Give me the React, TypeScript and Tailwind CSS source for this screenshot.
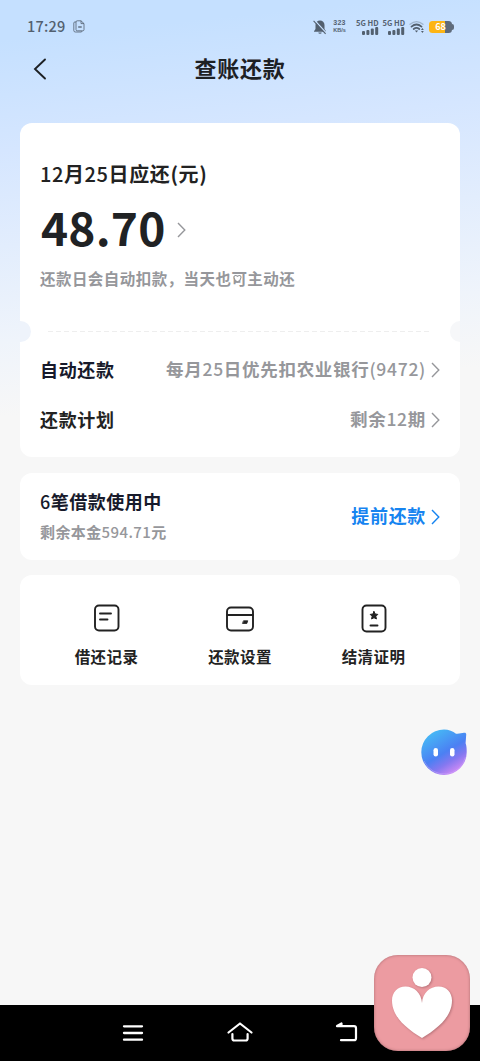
import type { ReactNode } from "react";

function Chevron({ className }: { className: string }) {
  return (
    <svg viewBox="0 0 9 16" className={`shrink-0 ${className}`} fill="none" stroke="currentColor" strokeWidth="1.4">
      <path d="M1 1l6.8 7L1 15" />
    </svg>
  );
}

function Signal() {
  return (
    <div className="flex w-[26.5px] flex-col items-center">
      <span className="whitespace-nowrap text-[7.5px] font-bold leading-[8px]">5G HD</span>
      <svg viewBox="0 0 17 8" className="ml-1.5 h-2 w-[17px]" fill="currentColor">
        <rect x="0" y="4" width="3" height="4" rx="1" />
        <rect x="4.4" y="3" width="3" height="5" rx="1" />
        <rect x="8.8" y="1.5" width="3" height="6.5" rx="1" />
        <rect x="13.2" y="0" width="3" height="8" rx="1" />
      </svg>
    </div>
  );
}

function StatusBar() {
  return (
    <div className="flex h-[44px] items-center justify-between pl-[27px] pr-[26px] pt-[9px] text-[#53606f]">
      <div className="flex items-center gap-[8px]">
        <span className="text-[14.5px] font-medium leading-none tracking-[0.2px]">17:29</span>
        <svg viewBox="0 0 12 13" className="h-[13px] w-3" fill="none" stroke="currentColor" strokeWidth="0.8">
          <path d="M3 2H1.8Q.8 2 .8 3v7.5q0 1.5 1.5 1.5H8q1 0 1-1" />
          <path d="M4.2.8H8L11 3.6v6q0 1.2-1.2 1.2H4.2Q3 10.8 3 9.6V2Q3 .8 4.2 .8ZM8 .8v2.8h3" />
          <path d="M5.2 7h3.5" strokeWidth="1.3" />
        </svg>
      </div>
      <div className="flex items-center">
        <svg viewBox="0 0 14 16" className="mr-[5px] h-4 w-[14px]">
          <path d="M7 1.5a4.5 4.5 0 0 1 4.5 4.5v4l1.5 2.2v.6H1v-.6L2.5 10V6A4.5 4.5 0 0 1 7 1.5ZM5.3 13.5h3.4a1.7 1.3 0 0 1-3.4 0Z" fill="currentColor" />
          <path d="M1.5 1.2l12 13" stroke="#cae2ff" strokeWidth="1.3" />
          <path d="M.6 1.8l12 13" stroke="currentColor" strokeWidth="1.1" />
        </svg>
        <div className="mr-[7px] flex w-[15px] flex-col items-center font-['Liberation_Sans',sans-serif] font-bold">
          <span className="h-[8px] text-[7px] leading-[8px] tracking-[0.3px]">323</span>
          <span className="h-[7px] text-[5.5px] leading-[7px]">KB/s</span>
        </div>
        <Signal />
        <Signal />
        <svg viewBox="0 0 16 14" className="ml-[2px] h-[14px] w-4" fill="none" stroke="currentColor" strokeLinecap="round">
          <path d="M1 4.3Q7.5-1.2 14 4.3" strokeWidth="1.2" opacity=".35" />
          <path d="M2.5 6.6Q7.5 2.5 12.5 6.6M4.7 9Q7.5 6.8 10.3 9" strokeWidth="1.8" />
          <path d="M5.8 10.4h3.4L7.5 12.5Z" fill="currentColor" stroke="none" />
          <path d="M12 10l1.4-1.9L14.8 10ZM12 11l1.4 1.9L14.8 11Z" fill="currentColor" stroke="none" />
        </svg>
        <div className="ml-1 flex items-center">
          <div className="flex h-3 w-[23px] items-center justify-center rounded-[3.5px] bg-[linear-gradient(90deg,#fdb515_70%,#5f6b7b_70%)] text-[9px] font-bold leading-none text-white">
            68
          </div>
          <div className="h-1.5 w-[2px] rounded-r-full bg-[#5f6b7b]" />
        </div>
      </div>
    </div>
  );
}

function InfoRow({ label, labelClass, children }: { label: string; labelClass: string; children: ReactNode }) {
  return (
    <div className="flex h-[50px] items-center justify-between">
      <span className={`-mt-[1.5px] text-[18px] font-bold tracking-[0.67px] ${labelClass}`}>{label}</span>
      <div className="-mt-px flex items-center gap-[5px] text-[#96979b]">
        <span className="-mt-px text-[17.5px] font-bold tracking-[0.7px]">{children}</span>
        <Chevron className="h-4 w-[9px]" />
      </div>
    </div>
  );
}

function Action({ label, children }: { label: string; children: ReactNode }) {
  return (
    <div className="flex w-[133.5px] flex-col items-center">
      <svg viewBox="0 0 30 30" className="h-[30px] w-[30px]" fill="none" stroke="#222" strokeWidth="1.9" strokeLinecap="round" strokeLinejoin="round">
        {children}
      </svg>
      <span className="mt-[11px] text-[15.5px] font-bold leading-[24px] tracking-[0.4px] text-[#222]">{label}</span>
    </div>
  );
}

function Assistant() {
  return (
    <svg viewBox="0 0 48 48" className="absolute left-[420px] top-[728px] h-12 w-12">
      <defs>
        <linearGradient id="bubble" x1=".25" y1=".05" x2=".8" y2=".95">
          <stop offset="0" stopColor="#46b8f5" />
          <stop offset=".5" stopColor="#4b80f3" />
          <stop offset=".72" stopColor="#8478f0" />
          <stop offset="1" stopColor="#d98cf5" />
        </linearGradient>
      </defs>
      <path
        d="M24 1.5c4.8 0 9 1.8 12 4.2 3 .3 5.5-.5 8-.9 1.7-.2 2.4.6 2.2 2l-.6 8.5c1 2.600 1.100 5.600 1.100 8.900A22.700 22.700 0 1 1 24 1.500Z"
        fill="url(#bubble)"
      />
      <path d="M4 33A22 22 0 0 0 45.500 29" fill="none" stroke="#c8a8ff" strokeWidth=".8" opacity=".6" />
      <rect x="13.500" y="20" width="4.500" height="8.500" rx="2.250" fill="#fff" />
      <rect x="30" y="20" width="4.500" height="8.500" rx="2.250" fill="#fff" />
    </svg>
  );
}

function HeartBadge() {
  return (
    <div className="absolute left-[374px] top-[955px] h-24 w-24 rounded-[24px] bg-[#ec9ba1] shadow-[inset_0_0_3px_#a86b70]">
      <svg viewBox="0 0 96 96" className="h-24 w-24 drop-shadow-[1px_1px_1px_#b8747a]" fill="#fff">
        <circle cx="48" cy="22.5" r="9.5" />
        <path d="M48 48C47.5 38 40 31.500 31.500 31.500 23.500 31.500 18 37.500 18 45.500 18 62 33 74 48 83 63 74 78 62 78 45.500 78 37.500 72.500 31.500 64.500 31.500 56 31.500 48.500 38 48 48Z" />
      </svg>
    </div>
  );
}

function NavBar() {
  return (
    <div className="flex h-14 items-center bg-black pl-[122px] text-white">
      <svg viewBox="0 0 22 18" className="h-[18px] w-[22px]" stroke="currentColor" strokeWidth="2.3" strokeLinecap="round">
        <path d="M2 2.3h18M2 9h18M2 15.7h18" />
      </svg>
      <svg viewBox="0 0 28 22" className="-mt-[5px] ml-[82px] h-[22px] w-7" fill="none" stroke="currentColor" strokeWidth="2.2" strokeLinecap="round" strokeLinejoin="round">
        <path d="M2.5 12.5L14 3.5l11.500 9M6.400 14v4.500q0 2 2 2h11.200q2 0 2-2V14" />
      </svg>
      <svg viewBox="0 0 24 22" className="-mt-[5px] ml-[80px] h-[22px] w-6" fill="none" stroke="currentColor" strokeWidth="2.2" strokeLinecap="round" strokeLinejoin="round">
        <path d="M3 6.200h17q2 0 2 2v10q0 2-2 2H7M3 6l4.500-2.500v2.500" />
      </svg>
    </div>
  );
}

export default function App() {
  return (
    <div className="relative flex h-[1061px] w-[480px] flex-col overflow-hidden bg-[#f7f7f7] font-['Noto_Sans_CJK_SC',sans-serif]">
      <div className="flex flex-1 flex-col bg-[linear-gradient(174deg,#c5e0ff_40px,#d5e6ff_150px,#eff4fb_340px,#f7f7f7_415px)]">
        <StatusBar />
        <header className="grid h-[50px] grid-cols-[70px_1fr_70px] items-center text-[#1d2024]">
          <svg viewBox="0 0 14 22" className="ml-[33px] h-[22px] w-[14px]" fill="none" stroke="currentColor" strokeWidth="1.9" strokeLinecap="round">
            <path d="M12 1.5L2 11l10 9.5" />
          </svg>
          <h1 className="-mt-1 text-center text-[22px] font-bold leading-none tracking-[0.8px]">查账还款</h1>
        </header>

        <main className="mx-5 mt-[29px] flex flex-col">
          <section className="relative h-[334px] rounded-[12px] bg-white px-5 pt-[36px]">
            <h2 className="text-[20px] font-bold leading-[30px] tracking-[0.6px] text-[#222]">
              <span className="font-medium">12</span>月<span className="font-medium">25</span>日应还(元)
            </h2>
            <div className="flex h-[82px] items-center">
              <span className="-mt-[8px] w-[137px] pl-px text-[46px] font-bold leading-none tracking-[0.2px] text-[#202224]">48.70</span>
              <Chevron className="h-4 w-[9px] text-[#96979b]" />
            </div>
            <p className="relative -top-px w-max text-[15.5px] font-bold leading-[16px] tracking-[0.45px] text-[#96979b]">
              还款日会自动扣款，当天也可主动还
              <svg viewBox="0 0 9 9" className="absolute left-[193px] top-[4px] h-[9px] w-[9px]" fill="#fff" stroke="#96979b" strokeWidth="1.1">
                <path d="M4.500 8C-1.500 4 1.500-.5 4.500 2.300 7.500-.5 10.500 4 4.500 8Z" />
              </svg>
            </p>
            <div className="mx-2 mt-[44px] h-px bg-[repeating-linear-gradient(90deg,#eee_0_5px,transparent_5px_8px)]" />
            <div className="mt-[13px]">
              <InfoRow label="自动还款" labelClass="text-[#171a2b]">
                每月<span className="font-medium">25</span>日优先扣农业银行<span className="font-medium">(9472)</span>
              </InfoRow>
              <InfoRow label="还款计划" labelClass="text-[#222]">
                剩余<span className="font-medium">12</span>期
              </InfoRow>
            </div>
            {/* ticket notches */}
            <div className="absolute left-0 top-[198px] h-[21px] w-[10.5px] rounded-r-full bg-[#eef3fb]" />
            <div className="absolute right-0 top-[198px] h-[21px] w-[10.5px] rounded-l-full bg-[#f6f7f9]" />
          </section>

          <section className="mt-4 flex h-[87px] items-center justify-between rounded-[12px] bg-white px-5">
            <div>
              <h3 className="-mt-px text-[18px] font-bold leading-[30px] tracking-[0.5px] text-[#171a2b]">
                <span className="font-medium">6</span>笔借款使用中
              </h3>
              <p className="text-[15px] font-bold leading-[31px] tracking-[0.4px] text-[#96979b]">
                剩余本金<span className="font-medium">594.71</span>元
              </p>
            </div>
            <div className="flex items-center gap-[5px] text-[#1684f0]">
              <span className="-mt-[2px] text-[18px] font-bold tracking-[0.67px]">提前还款</span>
              <Chevron className="h-4 w-[9px]" />
            </div>
          </section>

          <section className="mt-[15px] flex h-[110px] justify-center rounded-[12px] bg-white pt-[28px]">
            <Action label="借还记录">
              <rect x="3" y="2.5" width="23.5" height="25" rx="4" />
              <path d="M8 10.5h11M8 16.500h7.500" />
            </Action>
            <Action label="还款设置">
              <rect x="2" y="4.5" width="26" height="23" rx="4" />
              <path d="M2 12h26" />
              <path d="M18.800 17.800h4l-1 2.700h-4Z" fill="#222" strokeWidth=".8" />
            </Action>
            <Action label="结清证明">
              <rect x="3.500" y="2.500" width="23" height="26" rx="4" />
              <path d="M15 8.500l1.200 2.500 2.600.4-1.900 1.900.5 2.700-2.400-1.300-2.400 1.300.5-2.700-1.900-1.900 2.600-.4Z" fill="#222" strokeWidth="1" />
              <path d="M11.500 22.500h7" />
            </Action>
          </section>
        </main>
      </div>
      <NavBar />
      <Assistant />
      <HeartBadge />
    </div>
  );
}
